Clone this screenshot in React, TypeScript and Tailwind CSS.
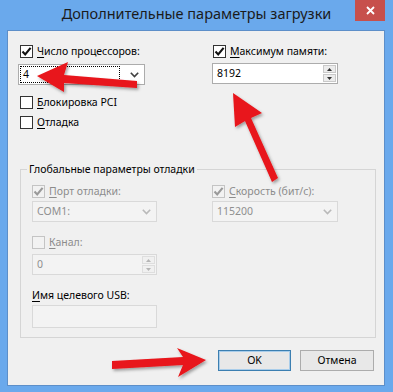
import React from "react";

const font = { fontFamily: '"Noto Sans", "Segoe UI", sans-serif' };

function Check({ checked, disabled }: { checked?: boolean; disabled?: boolean }) {
	return (
		<span
			className={`flex h-[13px] w-[13px] shrink-0 items-center justify-center border ${
				disabled ? "border-[#c4c4c4] bg-[#f2f2f2]" : "border-[#333333] bg-white"
			}`}
		>
			{checked && (
				<svg width="11" height="11" viewBox="0 0 11 11">
					<path
						d="M1.5 5.6 L4.2 8.4 L9.6 1.8"
						fill="none"
						stroke={disabled ? "#9a9a9a" : "#111111"}
						strokeWidth="2.1"
					/>
				</svg>
			)}
		</span>
	);
}

function CheckRow({
	acc,
	rest,
	checked,
	disabled,
}: {
	acc: string;
	rest: string;
	checked?: boolean;
	disabled?: boolean;
}) {
	return (
		<div className="flex h-[14px] items-center gap-[4px]">
			<Check checked={checked} disabled={disabled} />
			<span className={`text-[10.5px] leading-[14px] ${disabled ? "text-[#8c8c8c]" : "text-black"}`}>
				<u className="underline-offset-2">{acc}</u>
				{rest}
			</span>
		</div>
	);
}

function Chevron({ disabled }: { disabled?: boolean }) {
	return (
		<svg width="9" height="6" viewBox="0 0 9 6">
			<path d="M0.8 0.8 L4.5 4.6 L8.2 0.8" fill="none" stroke={disabled ? "#b9b9b9" : "#404040"} strokeWidth="1.6" />
		</svg>
	);
}

function Select({ value, disabled, focus }: { value: string; disabled?: boolean; focus?: boolean }) {
	return (
		<div
			className={`flex h-[21px] items-center border pr-[5px] ${
				disabled ? "border-[#d9d9d9] bg-[#f3f3f3] text-[#8f8f8f]" : "border-[#acacac] bg-white text-black"
			}`}
		>
			<div className="flex h-full flex-1 items-center p-[1px]">
				<div
					className={`flex h-full flex-1 items-center pl-[2px] text-[10.5px] ${
						focus ? "border border-dotted border-black" : "pl-[3px]"
					}`}
				>
					{value}
				</div>
			</div>
			<div className="ml-[8px] flex w-[10px] justify-center">
				<Chevron disabled={disabled} />
			</div>
		</div>
	);
}

function Spin({ value, disabled }: { value: string; disabled?: boolean }) {
	const c = disabled ? "#b5b5b5" : "#333333";
	const btn = disabled ? "border-[#dedede] bg-[#f0f0f0]" : "border-[#c9c9c9] bg-[#ececec]";
	return (
		<div
			className={`flex h-[21px] items-stretch border ${
				disabled ? "border-[#d9d9d9] bg-[#f3f3f3] text-[#8f8f8f]" : "border-[#acacac] bg-white text-black"
			}`}
		>
			<div className="flex flex-1 items-center pl-[4px] text-[10.5px]">{value}</div>
			<div className="flex w-[15px] flex-col gap-[1px] p-[1px]">
				<div className={`flex flex-1 items-center justify-center border ${btn}`}>
					<svg width="5" height="3" viewBox="0 0 5 3">
						<path d="M0 3 L2.5 0 L5 3 Z" fill={c} />
					</svg>
				</div>
				<div className={`flex flex-1 items-center justify-center border ${btn}`}>
					<svg width="5" height="3" viewBox="0 0 5 3">
						<path d="M0 0 L2.5 3 L5 0 Z" fill={c} />
					</svg>
				</div>
			</div>
		</div>
	);
}

export default function App() {
	return (
		<div className="relative h-[392px] w-[393px] overflow-hidden bg-[#6aa9ec]" style={font}>
			{/* title bar */}
			<div className="relative flex h-[30px] items-center justify-center">
				<span className="pb-[2px] text-[14.5px] text-[#1b1b1b]">Дополнительные параметры загрузки</span>
				<div className="absolute right-[8px] top-0 flex h-[21px] w-[30px] items-center justify-center bg-[#c7504c]">
					<svg width="9" height="9" viewBox="0 0 9 9">
						<path d="M1 1 L8 8 M8 1 L1 8" stroke="white" strokeWidth="1.8" />
					</svg>
				</div>
			</div>

			{/* client */}
			<div className="mx-[7px] flex h-[356px] w-[378px] flex-col border border-[#5d8fc9] bg-[#f0f0f0] pt-[13px] text-black">
				<div className="flex pl-[10px]">
					<div className="flex w-[194px] flex-col">
						<div className="pl-[2px]">
							<CheckRow acc="Ч" rest="исло процессоров:" checked />
						</div>
						<div className="mt-[6px] w-[127px]">
							<Select value="4" focus />
						</div>
						<div className="mt-[10px] pl-[2px]">
							<CheckRow acc="Б" rest="локировка PCI" />
						</div>
						<div className="mt-[6px] pl-[2px]">
							<CheckRow acc="О" rest="тладка" />
						</div>
					</div>
					<div className="flex flex-col">
						<div className="pl-[1px]">
							<CheckRow acc="М" rest="аксимум памяти:" checked />
						</div>
						<div className="mt-[5px] w-[126px]">
							<Spin value="8192" />
						</div>
					</div>
				</div>

				<fieldset className="ml-[12px] mt-[32px] h-[177px] w-[356px] border border-[#d5d5d5] px-0">
					<legend className="ml-[6px] px-[2px] text-[10.5px] leading-[16px]">Глобальные параметры отладки</legend>
					<div className="flex pl-[11px] pt-[7px]">
						<div className="flex w-[180px] flex-col">
							<CheckRow acc="П" rest="орт отладки:" checked disabled />
							<div className="mt-[3px] w-[125px]">
								<Select value="COM1:" disabled />
							</div>
							<div className="mt-[13px]">
								<CheckRow acc="К" rest="анал:" disabled />
							</div>
							<div className="mt-[5px] w-[125px]">
								<Spin value="0" disabled />
							</div>
							<div className="mt-[13px] h-[14px] text-[10.5px] leading-[14px]">
								<u className="underline-offset-2">И</u>мя целевого USB:
							</div>
							<div className="mt-[3px] h-[23px] w-[125px] border border-[#d9d9d9] bg-[#f3f3f3]" />
						</div>
						<div className="flex flex-col">
							<CheckRow acc="С" rest="корость (бит/с):" checked disabled />
							<div className="mt-[3px] w-[126px]">
								<Select value="115200" disabled />
							</div>
						</div>
					</div>
				</fieldset>

				<div className="mt-[12px] flex justify-end gap-[9px] pr-[10px]">
					<button className="h-[21px] w-[73px] border border-[#3c7fb1] bg-[#e8e8e8] text-[10.5px] shadow-[inset_0_0_0_1px_#a9cdea]">
						OK
					</button>
					<button className="h-[21px] w-[74px] border border-[#acacac] bg-[#e8e8e8] text-[10.5px]">
						Отмена
					</button>
				</div>
			</div>

			{/* annotation arrows */}
			<svg className="pointer-events-none absolute left-0 top-0" width="393" height="392" viewBox="0 0 393 392">
				<defs>
					<filter id="sh" x="-20%" y="-20%" width="140%" height="140%">
						<feDropShadow dx="1.5" dy="2" stdDeviation="1.5" floodColor="#000" floodOpacity="0.35" />
					</filter>
				</defs>
				<g fill="#e8141a" filter="url(#sh)">
					<polygon points="37,76 68,62 64,75 137,81 137,88 64,83 64,92" />
					<polygon points="233,93 262,113 251,118 278,178 272,182 245,121 235,127" />
					<polygon points="206,360 178,377 183,365 112,369 112,361 183,357 177,348" />
				</g>
			</svg>
		</div>
	);
}
